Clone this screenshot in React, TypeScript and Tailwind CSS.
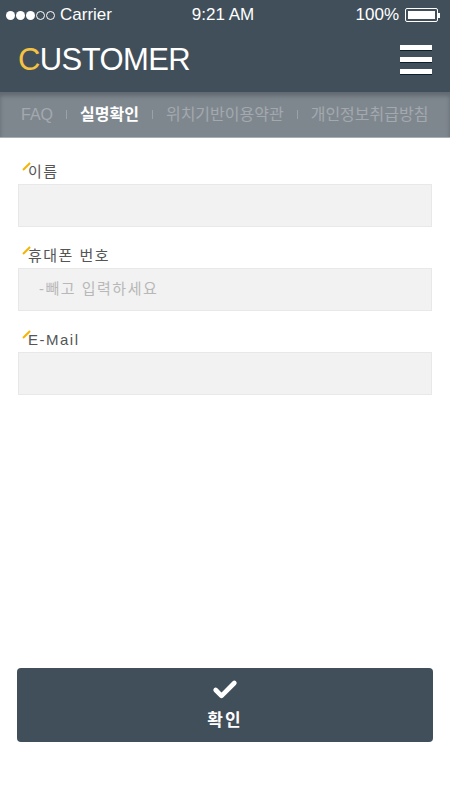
import { Check } from 'lucide-react';

const font = { fontFamily: '"Liberation Sans", "Noto Sans CJK KR", sans-serif' };

const tabs = [
  { label: 'FAQ', active: false },
  { label: '실명확인', active: true },
  { label: '위치기반이용약관', active: false },
  { label: '개인정보취급방침', active: false },
];

function Field({ label, placeholder }: { label: string; placeholder?: string }) {
  return (
    <div className="flex flex-col">
      <div className="relative h-[28px] pl-[10px] pt-[7px] text-[15px] leading-[18px] tracking-[1.5px] text-[#555]">
        <span className="absolute left-[1px] top-[4px] h-[10px] w-[2px] rotate-45 origin-bottom bg-[#f5b400] translate-x-[3px]" />
        {label}
      </div>
      <div className="h-[43px] border border-[#e8e8e8] bg-[#f2f2f2] px-[20px] flex items-center text-[15px] tracking-[1.5px] text-[#b8b8b8]">
        {placeholder}
      </div>
    </div>
  );
}

export default function App() {
  return (
    <div className="flex h-[800px] w-[450px] flex-col bg-white" style={font}>
      <div className="bg-[#414f5a]">
        <div className="grid h-[30px] grid-cols-3 items-center pl-[6px] pr-[10px] text-[17px] text-white">
          <div className="flex items-center">
            <div className="flex gap-[1px]">
              {[true, true, true, false, false].map((on, i) => (
                <span
                  key={i}
                  className={on ? 'h-[9px] w-[9px] rounded-full bg-white' : 'h-[9px] w-[9px] rounded-full border border-white'}
                />
              ))}
            </div>
            <span className="ml-[5px]">Carrier</span>
          </div>
          <span className="text-center">9:21 AM</span>
          <div className="flex items-center justify-end gap-[6px]">
            <span>100%</span>
            <div className="flex items-center">
              <div className="h-[14px] w-[33px] rounded-[2px] border border-white p-[2px]">
                <div className="h-full w-full bg-white" />
              </div>
              <div className="h-[5px] w-[2px] bg-white" />
            </div>
          </div>
        </div>
        <div className="flex h-[62px] items-center justify-between pl-[18px] pr-[18px]">
          <div className="text-[31px] tracking-[-0.6px] text-white pb-[2px]">
            <span className="text-[#f5c242]">C</span>USTOMER
          </div>
          <div className="flex w-[32px] flex-col gap-[7px] pb-[3px]">
            <div className="h-[5px] bg-white shadow-[0_1px_0_#0d1f2b]" />
            <div className="h-[5px] bg-white shadow-[0_1px_0_#0d1f2b]" />
            <div className="h-[5px] bg-white shadow-[0_1px_0_#0d1f2b]" />
          </div>
        </div>
      </div>
      <div className="flex h-[46px] items-center bg-[#7f878e] pl-[21px] text-[16px] shadow-[inset_0_4px_4px_rgba(40,50,60,0.35)] border-b border-[#a9afb4]">
        {tabs.map((t, i) => (
          <div key={t.label} className="flex items-center">
            {i > 0 && <span className="mx-[13px] h-[9px] w-px bg-[#9aa1a7]" />}
            <span className={t.active ? 'font-bold text-white' : 'text-[#a3a9ae]'}>{t.label}</span>
          </div>
        ))}
      </div>
      <div className="flex flex-col gap-[13px] px-[18px] pt-[18px]">
        <Field label="이름" />
        <Field label="휴대폰 번호" placeholder="-빼고 입력하세요" />
        <Field label="E-Mail" />
      </div>
      <div className="mt-auto px-[17px] pb-[58px]">
        <button className="flex h-[74px] w-full flex-col items-center justify-center gap-[4px] rounded-[4px] bg-[#414f5a] text-white">
          <Check size={28} strokeWidth={4} />
          <span className="text-[17px] font-bold tracking-[2px]">확인</span>
        </button>
      </div>
    </div>
  );
}
